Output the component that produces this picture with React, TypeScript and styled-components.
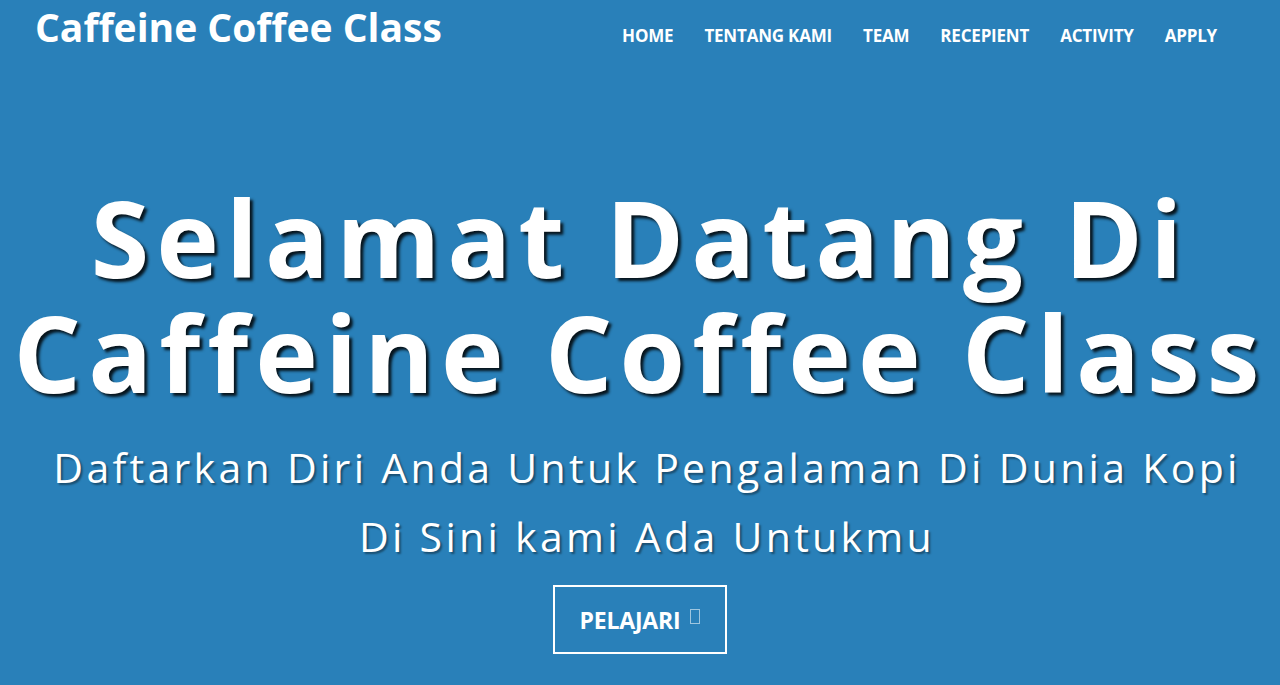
import React from "react";
import styled, { createGlobalStyle } from "styled-components";

const Global = createGlobalStyle`
  html, body { margin: 0; padding: 0; }
  body { background: #2980b9; font-family: "Open Sans", "Liberation Sans", sans-serif; color: #fff; }
`;

const Page = styled.div`
  width: 1280px;
  height: 685px;
  overflow: hidden;
  background: #2980b9;
  display: flex;
  flex-direction: column;
`;

const Header = styled.header`
  display: flex;
  justify-content: space-between;
  align-items: flex-start;
  padding: 0 63px 0 35px;
  height: 70px;
`;

const Brand = styled.a`
  font-size: 39px;
  font-weight: 700;
  line-height: 54px;
  color: #fff;
  text-decoration: none;
`;

const Nav = styled.nav`
  display: flex;
  gap: 31px;
  padding-top: 25px;
`;

const NavLink = styled.a`
  font-size: 17px;
  font-weight: 700;
  text-transform: uppercase;
  color: #fff;
  text-decoration: none;
  line-height: 22px;
  letter-spacing: -0.2px;
`;

const Hero = styled.section`
  display: flex;
  flex-direction: column;
  align-items: center;
  text-align: center;
  padding-top: 110px;
`;

const Title = styled.h1`
  margin: 0;
  font-size: 106px;
  font-weight: 700;
  line-height: 115px;
  letter-spacing: 7px;
  text-shadow: 3px 3px 3px rgba(0, 0, 0, 0.85);
`;

const Sub = styled.p`
  margin: 23px 0 0;
  padding-left: 14px;
  font-size: 41px;
  font-weight: 400;
  line-height: 69px;
  letter-spacing: 3.3px;
  text-shadow: 2px 2px 2px rgba(0, 0, 0, 0.4);
`;

const Button = styled.a`
  margin-top: 14px;
  width: 174px;
  height: 69px;
  box-sizing: border-box;
  border: 2px solid #fff;
  display: flex;
  align-items: center;
  justify-content: center;
  gap: 10px;
  font-size: 23px;
  font-weight: 700;
  color: #fff;
  text-decoration: none;
  letter-spacing: -0.2px;
`;

const Tofu = styled.span`
  display: inline-block;
  width: 8px;
  height: 13px;
  border: 1px solid rgba(255, 255, 255, 0.55);
  margin-top: -6px;
`;

const links = ["Home", "Tentang Kami", "Team", "Recepient", "Activity", "Apply"];

export default function App() {
  return (
    <Page>
      <Global />
      <Header>
        <Brand href="#">Caffeine Coffee Class</Brand>
        <Nav>
          {links.map((l) => (
            <NavLink key={l} href="#">{l}</NavLink>
          ))}
        </Nav>
      </Header>
      <Hero>
        <Title>
          Selamat Datang Di
          <br />
          Caffeine Coffee Class
        </Title>
        <Sub>
          Daftarkan Diri Anda Untuk Pengalaman Di Dunia Kopi
          <br />
          Di Sini kami Ada Untukmu
        </Sub>
        <Button href="#">
          PELAJARI <Tofu />
        </Button>
      </Hero>
    </Page>
  );
}
